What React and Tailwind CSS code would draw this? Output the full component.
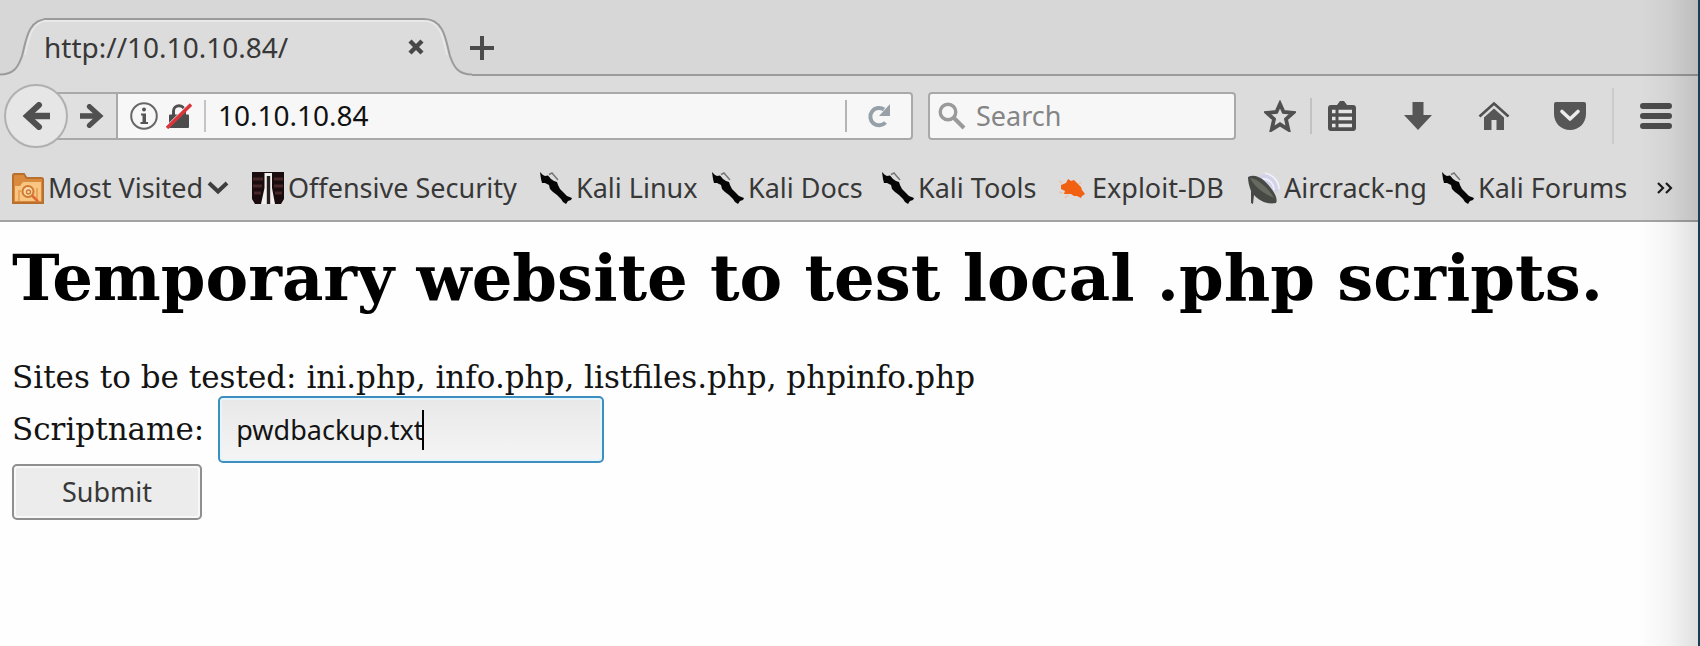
import React from "react";

const SANS = "font-['Noto_Sans','Open_Sans',sans-serif]";
const SERIF = "font-['DejaVu_Serif',serif]";

function TabSlope({ flip }) {
  return (
    <svg width="48" height="58" viewBox="0 0 48 58" className={flip ? "-scale-x-100" : ""} aria-hidden="true">
      <path d="M0 58V56.500C13 56.500 18 50 22 38C26 24 27 1.500 48 1.500V58Z" fill="#dcdcdc" />
      <path d="M0 56.500C13 56.500 18 50 22 38C26 24 27 1 48 1" fill="none" stroke="#9b9b9b" strokeWidth="2" />
      <path d="M25 37C29 20 31 3 48 3" fill="none" stroke="#e9e9e9" strokeWidth="1.500" />
    </svg>
  );
}

function CloseIcon() {
  return (
    <svg width="16" height="16" viewBox="0 0 16 16" aria-hidden="true">
      <path d="M2 2L14 14M14 2L2 14" stroke="#484848" strokeWidth="4.400" />
      <path d="M8 0V3M8 13V16M0 8H3M13 8H16" stroke="#dcdcdc" strokeWidth="2" />
    </svg>
  );
}

function PlusIcon() {
  return (
    <svg width="24" height="24" viewBox="0 0 24 24" aria-hidden="true">
      <path d="M12 0V24M0 12H24" stroke="#4b4b4b" strokeWidth="4" />
    </svg>
  );
}

function Arrow({ flip, size }) {
  return (
    <svg width={size} height={size} viewBox="0 0 28 28" className={flip ? "-scale-x-100" : ""} aria-hidden="true">
      <path d="M17 3L5 14L17 25" fill="none" stroke="#505050" strokeWidth="6" strokeLinecap="round" />
      <path d="M5 14H28" stroke="#505050" strokeWidth="6.500" />
    </svg>
  );
}

function InfoIcon() {
  return (
    <svg width="28" height="28" viewBox="0 0 28 28" aria-hidden="true">
      <circle cx="14" cy="14" r="12.800" fill="none" stroke="#666" strokeWidth="2" />
      <circle cx="14" cy="7.500" r="2" fill="#555" />
      <path d="M11 11.500H16V20H18V22H10.500V20H12.500V13.500H11Z" fill="#555" />
    </svg>
  );
}

function InsecureIcon() {
  return (
    <svg width="26" height="26" viewBox="0 0 26 26" aria-hidden="true">
      <path d="M7.500 13V8C7.500 1 18.500 1 18.500 8V13" fill="none" stroke="#505050" strokeWidth="3" />
      <rect x="3" y="11.500" width="20" height="13.500" rx="1" fill="#4c4c4c" />
      <path d="M3 22L24 1" stroke="#f6f6f6" strokeWidth="3" />
      <path d="M1 25L25 1.500" stroke="#d9363c" strokeWidth="3.400" />
    </svg>
  );
}

function ReloadIcon() {
  return (
    <svg width="24" height="24" viewBox="0 0 24 24" aria-hidden="true">
      <path d="M18.500 18.500A8.700 8.700 0 1 1 17 5.500" fill="none" stroke="#96a0a8" strokeWidth="4" />
      <path d="M23 0V12H12Z" fill="#98a0a6" />
    </svg>
  );
}

function Magnifier() {
  return (
    <svg width="28" height="28" viewBox="0 0 28 28" aria-hidden="true">
      <circle cx="10" cy="10" r="7.800" fill="none" stroke="#9a9a9a" strokeWidth="3.400" />
      <path d="M15.500 15.500L26 26" stroke="#9a9a9a" strokeWidth="4" />
    </svg>
  );
}

function StarIcon() {
  return (
    <svg width="32" height="32" viewBox="0 0 32 32" aria-hidden="true">
      <path d="M16 4L19.600 12L29 12.800L22 19.200L24.300 29.500L16 24.300L7.700 29.500L10 19.200L3 12.800L12.400 12Z" fill="none" stroke="#505050" strokeWidth="3.800" />
    </svg>
  );
}

function ListIcon() {
  return (
    <svg width="32" height="32" viewBox="0 0 32 32" aria-hidden="true">
      <path d="M11 5L14 1H18L21 5H27Q30 5 30 8V28Q30 31 27 31H5Q2 31 2 28V8Q2 5 5 5Z" fill="#505050" />
      <path d="M6 11.500H9.500M6 18.500H9.500M6 25.500H9.500M12.500 11.500H26M12.500 18.500H26M12.500 25.500H26" stroke="#e6e6e6" strokeWidth="3.600" />
    </svg>
  );
}

function DownloadIcon() {
  return (
    <svg width="32" height="32" viewBox="0 0 32 32" aria-hidden="true">
      <path d="M10.500 2H21.500V15H30L16 30L2 15H10.500Z" fill="#565656" />
    </svg>
  );
}

function HomeIcon() {
  return (
    <svg width="32" height="32" viewBox="0 0 32 32" aria-hidden="true">
      <path d="M1.500 16.500L16 3.500L30.500 16.500" fill="none" stroke="#505050" strokeWidth="2.600" />
      <path d="M16 8.500L26 17.500V30H18.500V20H13.500V30H6V17.500Z" fill="#565656" />
    </svg>
  );
}

function PocketIcon() {
  return (
    <svg width="32" height="32" viewBox="0 0 32 32" aria-hidden="true">
      <path d="M2 2H30Q32 2 32 4V14C32 23 25 30 16 30S0 23 0 14V4Q0 2 2 2Z" fill="#565656" />
      <path d="M8 11.500L16 19L24 11.500" fill="none" stroke="#ececec" strokeWidth="3.600" strokeLinecap="round" strokeLinejoin="round" />
    </svg>
  );
}

function MenuIcon() {
  return (
    <svg width="32" height="28" viewBox="0 0 32 28" aria-hidden="true">
      <path d="M3 4H29M3 14H29M3 24H29" stroke="#4c4c4c" strokeWidth="6" strokeLinecap="round" />
    </svg>
  );
}

function FolderIcon() {
  return (
    <svg width="32" height="32" viewBox="0 0 32 32" aria-hidden="true">
      <path d="M1 31V3.500Q1 2 2.500 2H12L14.500 6H29.500Q31 6 31 7.500V31Z" fill="#d98a3d" stroke="#b9702c" strokeWidth="2" />
      <path d="M3 29V14H8L11 10H29V29Z" fill="#f9c583" />
      <path d="M7 29V19H9M25 29V16" stroke="#e59a4e" strokeWidth="1.500" fill="none" />
      <circle cx="16" cy="19.500" r="5.500" fill="#fbd9ac" stroke="#cf7a30" strokeWidth="2" />
      <circle cx="16.500" cy="20" r="2" fill="none" stroke="#cf7a30" strokeWidth="1.500" />
      <path d="M20 23.500L26 29.500" stroke="#e06a35" strokeWidth="2.600" />
    </svg>
  );
}

function OffsecIcon() {
  return (
    <svg width="32" height="32" viewBox="0 0 32 32" aria-hidden="true">
      <rect width="32" height="32" fill="#1a0c0e" />
      <path d="M1 7H11M1 14H10M2 21H9M22 7H31M22 14H31M23 21H30" stroke="#472627" strokeWidth="3" />
      <path d="M12.500 1H20V16L23 32H9L12.500 16Z" fill="#f3f1ef" />
      <path d="M16.500 4V32" stroke="#27201f" strokeWidth="3.400" />
      <path d="M0 32V27L3 32ZM32 32V27L29 32Z" fill="#dcdcdc" />
    </svg>
  );
}

function KaliIcon() {
  return (
    <svg width="32" height="32" viewBox="0 0 32 32" aria-hidden="true">
      <path d="M0 0L3 3L5 4L8 3.500L11 7L14 9L17 10L18 13L20 17L24 21L27 24L32 26L31 28L28 29L26 32L23 30L21 27L17 23L13 20L10 17L9 13L5 11L2 11L1 7Z" fill="#050505" />
      <path d="M9 2.500L12 1L18 8" fill="none" stroke="#777" strokeWidth="1.500" />
    </svg>
  );
}

function ExploitIcon() {
  return (
    <svg width="32" height="32" viewBox="0 0 32 32" aria-hidden="true">
      <path d="M5 13L10 11L12 7L15 9L18 8L22 12L25 15L26 18L29 22L26 24L25 26L21 24L18 24L15 22L8 22L9 19L5 17Z" fill="#f26011" />
      <path d="M3 9L6 11M3 20L7 21M9 26L12 23M25 10L23 12" stroke="#efc0a2" strokeWidth="1.500" />
    </svg>
  );
}

function AircrackIcon() {
  return (
    <svg width="32" height="32" viewBox="0 0 32 32" aria-hidden="true">
      <path d="M12 3C22 0 31 9 30 21L23 17L13 8Z" fill="#d2d2ea" />
      <path d="M14 7C21 6 26 12 26 18M17 1C26 3 31 10 31 17" fill="none" stroke="#f1f1fb" strokeWidth="1.600" />
      <path d="M0 5C8 1 16 7 22 15C27 21 30 27 28 31C19 33 10 28 6 23L5 32L3 31L3 19C1 14 0 9 0 5Z" fill="#474a44" />
      <path d="M2 6C9 6 22 18 26 26C17 22 7 16 2 6Z" fill="#666a60" />
    </svg>
  );
}

const BOOKMARKS = [
  { label: "Most Visited", Icon: FolderIcon, menu: true },
  { label: "Offensive Security", Icon: OffsecIcon },
  { label: "Kali Linux", Icon: KaliIcon },
  { label: "Kali Docs", Icon: KaliIcon },
  { label: "Kali Tools", Icon: KaliIcon },
  { label: "Exploit-DB", Icon: ExploitIcon },
  { label: "Aircrack-ng", Icon: AircrackIcon },
  { label: "Kali Forums", Icon: KaliIcon },
];

function TabStrip() {
  return (
    <div className="flex h-[76px] items-end bg-[#d7d7d7] shadow-[inset_0_-2px_0_#9b9b9b]">
      <div className="flex h-[58px] items-stretch">
        <TabSlope />
        <div className="-ml-1 flex w-[380px] items-center justify-between border-t-2 border-[#9b9b9b] bg-[#dcdcdc] pb-0.5 shadow-[inset_0_2px_0_#e9e9e9]">
          <span className="text-[28px] leading-8 text-[#383838]">http://10.10.10.84/</span>
          <button aria-label="Close tab"><CloseIcon /></button>
        </div>
        <TabSlope flip />
      </div>
      <button aria-label="New tab" className="mb-4 -ml-0.5"><PlusIcon /></button>
    </div>
  );
}

function NavBar() {
  return (
    <div className="flex h-20 items-center pl-1 pr-7">
      <button aria-label="Back" className="z-10 flex size-16 shrink-0 items-center justify-center rounded-full border-2 border-[#b0b0b0] bg-[#e6e6e6]">
        <Arrow size={28} />
      </button>
      <div className="-ml-3 flex h-12 flex-1 rounded-r-sm border-2 border-[#a9a9a9] bg-[#f7f7f7]">
        <button aria-label="Forward" className="flex w-[60px] items-center justify-end border-r-2 border-[#a9a9a9] bg-[#e0e0e0] pr-3">
          <Arrow size={24} flip />
        </button>
        <div className="flex flex-1 items-center pl-3">
          <InfoIcon />
          <span className="ml-2"><InsecureIcon /></span>
          <span className="ml-3 h-8 w-0.5 bg-[#c4c4c4]" />
          <input aria-label="Address" defaultValue="10.10.10.84" className="ml-3 w-0 flex-1 bg-transparent pb-0.5 text-[28px] leading-8 text-[#111] outline-none" />
          <span className="h-8 w-0.5 bg-[#b4b4b4]" />
          <button aria-label="Reload" className="flex w-16 items-center justify-center"><ReloadIcon /></button>
        </div>
      </div>
      <div className="ml-[15px] flex h-12 w-[308px] items-center gap-2.5 rounded-sm border-2 border-[#a9a9a9] bg-[#f7f7f7] pl-2">
        <Magnifier />
        <input aria-label="Search" placeholder="Search" className="w-0 flex-1 bg-transparent text-[27px] leading-8 outline-none placeholder:text-[#858585]" />
      </div>
      <button aria-label="Bookmark this page" className="ml-7"><StarIcon /></button>
      <span className="ml-3.5 h-9 w-0.5 bg-[#c2c2c2]" />
      <div className="ml-3.5 flex items-center gap-11">
        <button aria-label="Bookmarks list"><ListIcon /></button>
        <button aria-label="Downloads"><DownloadIcon /></button>
        <button aria-label="Home"><HomeIcon /></button>
        <button aria-label="Pocket"><PocketIcon /></button>
      </div>
      <span className="ml-[26px] h-14 w-0.5 bg-[#cbcbcb]" />
      <button aria-label="Menu" className="ml-[26px]"><MenuIcon /></button>
    </div>
  );
}

function BookmarksBar() {
  return (
    <nav className="grid h-16 grid-cols-[240fr_288fr_172fr_170fr_174fr_192fr_194fr_214fr_26px] items-center pl-3 pr-[18px] text-[27px] leading-8 text-[#383838]">
      {BOOKMARKS.map(({ label, Icon, menu }) => (
        <a key={label} href="#" className="flex items-center gap-1 whitespace-nowrap">
          <Icon />
          <span>{label}</span>
          {menu && (
            <svg width="22" height="14" viewBox="0 0 22 14" aria-hidden="true">
              <path d="M2 2L11 10.500L20 2" fill="none" stroke="#3f3f3f" strokeWidth="4" />
            </svg>
          )}
        </a>
      ))}
      <button aria-label="More bookmarks" className="justify-self-start">
        <svg width="18" height="12" viewBox="0 0 18 12" aria-hidden="true">
          <path d="M2 1L7 6L2 11M10 1L15 6L10 11" fill="none" stroke="#1c1c1c" strokeWidth="2.200" />
        </svg>
      </button>
    </nav>
  );
}

export default function App() {
  return (
    <div className={`relative flex min-h-screen flex-col bg-[#fefefe] ${SANS}`}>
      <header className="border-b-2 border-[#a3a3a3] bg-[#dcdcdc]">
        <TabStrip />
        <NavBar />
        <BookmarksBar />
      </header>
      <main className={`px-3 pt-[18px] text-[31px] leading-[37px] text-[#141414] ${SERIF}`}>
        <h1 className="text-[64px] font-bold leading-[75px] text-black">Temporary website to test local .php scripts.</h1>
        <form className="mt-11" onSubmit={(e) => e.preventDefault()}>
          <p>Sites to be tested: ini.php, info.php, listfiles.php, phpinfo.php</p>
          <div className="flex items-center gap-3.5">
            <label htmlFor="scriptname">Scriptname:</label>
            <div className="relative">
              <input
                id="scriptname"
                defaultValue="pwdbackup.txt"
                className={`block h-[67px] w-[386px] rounded-[5px] border-2 border-[#3d8fc0] bg-linear-to-b from-[#e8e8e8] to-[#f5f5f5] px-4 text-[27px] text-[#141414] shadow-[inset_0_0_0_2px_#e6f5fb] outline-none ${SANS}`}
              />
              <span className="absolute left-[204px] top-3.5 h-10 w-0.5 bg-black" />
            </div>
          </div>
          <button className={`mt-px block h-14 w-[190px] rounded-[5px] border-2 border-[#8f8f8f] bg-[#ececec] pb-0.5 text-[27px] text-[#383838] shadow-[inset_0_0_0_2px_#f8f8f8] ${SANS}`}>
            Submit
          </button>
        </form>
      </main>
      <div className="pointer-events-none absolute inset-y-0 right-0 flex w-[60px]">
        <span className="flex-1 bg-linear-to-r from-black/0 via-black/4 to-black/12" />
        <span className="w-0.5 bg-[#173e52]" />
      </div>
    </div>
  );
}
